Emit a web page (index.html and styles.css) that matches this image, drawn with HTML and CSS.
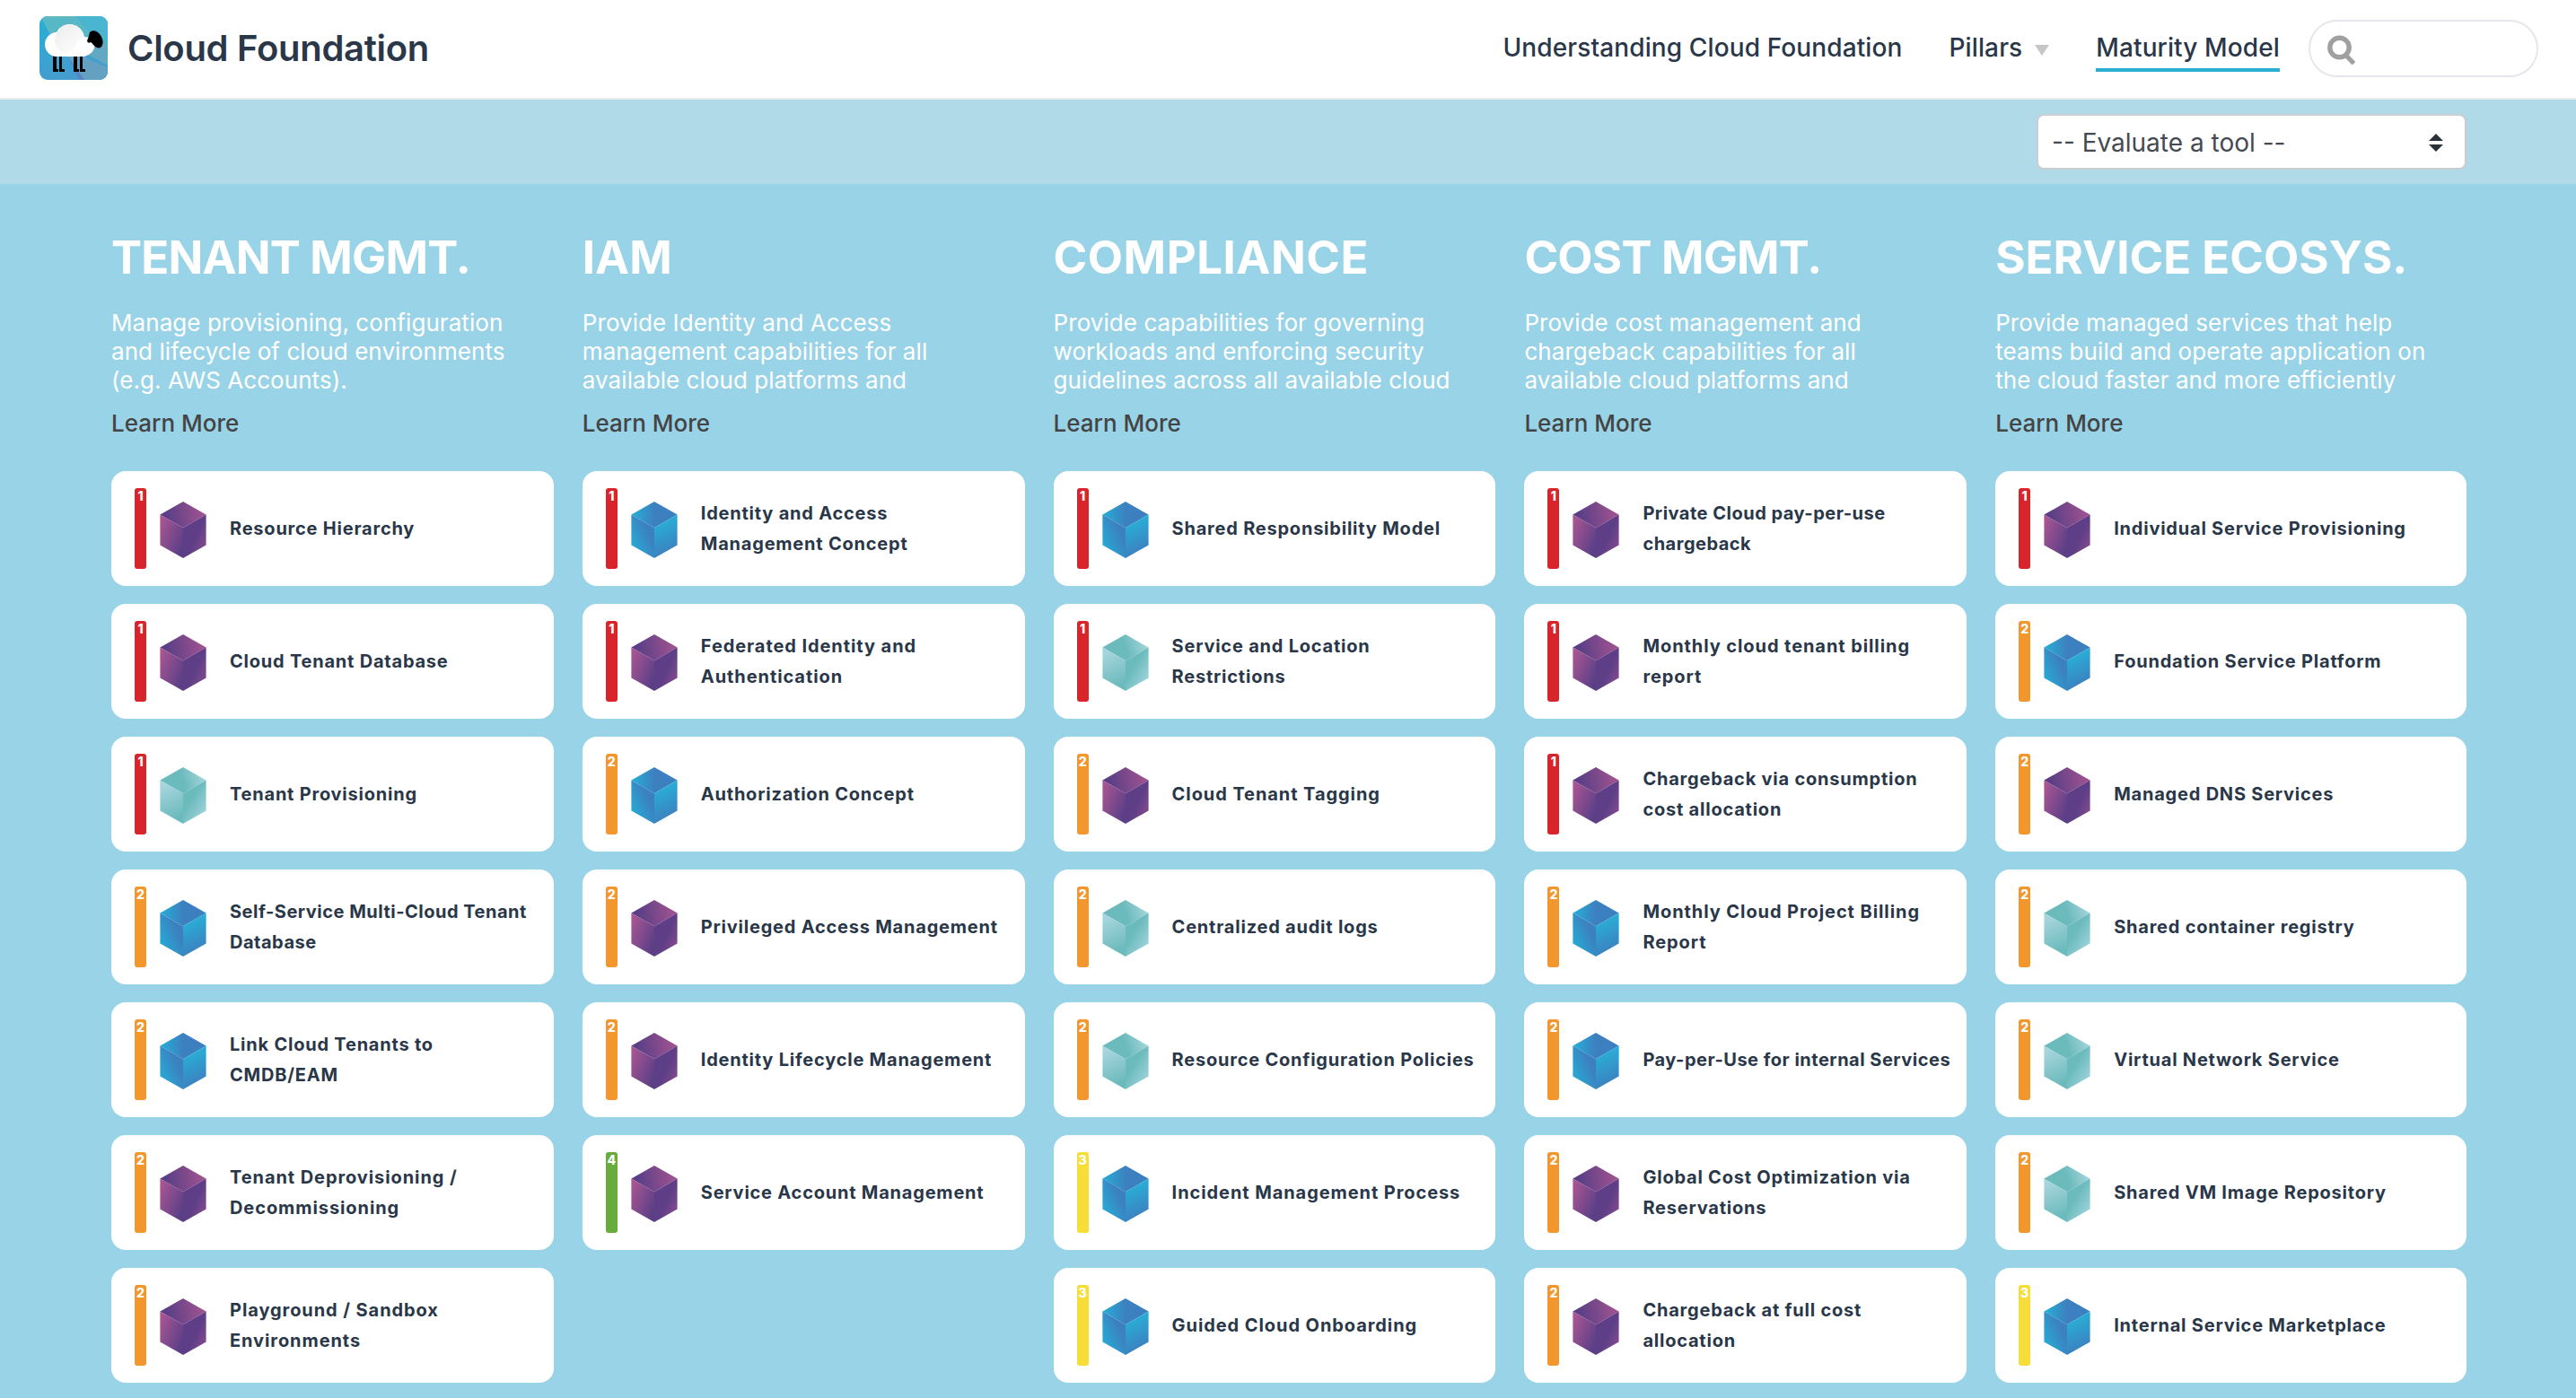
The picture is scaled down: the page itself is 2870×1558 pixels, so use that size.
FILE: index.html
```html
<!DOCTYPE html>
<html lang="en">
<head>
<meta charset="utf-8">
<title>Cloud Foundation Maturity Model</title>
<link rel="stylesheet" href="styles.css">
</head>
<body>
<svg class="defs" width="0" height="0" aria-hidden="true">
  <defs>
    <linearGradient id="p-top" x1="0" x2="1" y1=".5" y2=".4"><stop offset=".1" stop-color="#573e86"/><stop offset=".9" stop-color="#9c528f"/></linearGradient>
    <linearGradient id="p-left" x1="0" y1=".15" x2=".9" y2=".85"><stop offset="0" stop-color="#a95692"/><stop offset="1" stop-color="#5a3f87"/></linearGradient>
    <linearGradient id="p-right" x1=".2" y1=".2" x2="1" y2=".9"><stop offset=".45" stop-color="#5e3f87"/><stop offset="1" stop-color="#8d4c8e"/></linearGradient>
    <linearGradient id="b-top" x1="0" x2="1" y1=".5" y2=".5"><stop offset="0" stop-color="#26afd7"/><stop offset=".5" stop-color="#3c80c0"/><stop offset="1" stop-color="#3d7fc1"/></linearGradient>
    <linearGradient id="b-left" x1=".9" y1=".3" x2=".2" y2=".9"><stop offset=".2" stop-color="#3c80c0"/><stop offset="1" stop-color="#27a9d4"/></linearGradient>
    <linearGradient id="b-right" x1=".4" y1=".1" x2=".6" y2=".9"><stop offset=".1" stop-color="#2aabd4"/><stop offset="1" stop-color="#3c80c0"/></linearGradient>
    <linearGradient id="t-top" x1="0" x2="1" y1=".6" y2=".4"><stop offset=".5" stop-color="#6bbabc"/><stop offset="1" stop-color="#a6d7dc"/></linearGradient>
    <linearGradient id="t-left" x1=".4" y1=".05" x2=".6" y2=".9"><stop offset="0" stop-color="#a6d5dd"/><stop offset="1" stop-color="#6bbabc"/></linearGradient>
    <linearGradient id="t-right" x1=".2" y1=".2" x2=".8" y2=".9"><stop offset=".3" stop-color="#6bbabc"/><stop offset="1" stop-color="#9dd3d9"/></linearGradient>
    <linearGradient id="logo-bg" x1="0" x2=".3" y1="0" y2="1"><stop offset="0" stop-color="#25b0d6"/><stop offset="1" stop-color="#459ccf"/></linearGradient>
    <linearGradient id="wool" x1="0" x2="1" y1="0" y2="1"><stop offset="0" stop-color="#ececec"/><stop offset="1" stop-color="#fff"/></linearGradient>
    <symbol id="purple" viewBox="0 0 52 63"><path fill="url(#p-top)" d="M26 0 51.6 14.6 26 29.2.4 14.6z"/><path fill="url(#p-left)" d="M.4 14.6 26 29.2V63L.4 48.4z"/><path fill="url(#p-right)" d="M51.6 14.6 26 29.2V63l25.6-14.6z"/></symbol>
    <symbol id="blue" viewBox="0 0 52 63"><path fill="url(#b-top)" d="M26 0 51.6 14.6 26 29.2.4 14.6z"/><path fill="url(#b-left)" d="M.4 14.6 26 29.2V63L.4 48.4z"/><path fill="url(#b-right)" d="M51.6 14.6 26 29.2V63l25.6-14.6z"/></symbol>
    <symbol id="teal" viewBox="0 0 52 63"><path fill="url(#t-top)" d="M26 0 51.6 14.6 26 29.2.4 14.6z"/><path fill="url(#t-left)" d="M.4 14.6 26 29.2V63L.4 48.4z"/><path fill="url(#t-right)" d="M51.6 14.6 26 29.2V63l25.6-14.6z"/></symbol>
  </defs>
</svg>

<header class="navbar">
  <a class="brand">
    <svg class="logo" viewBox="0 0 76 71">
      <path fill="url(#logo-bg)" d="M0 0h76v71H0z"/>
      <path fill="#49b5d0" d="M0 0h76v50L22 20z"/>
      <path fill="#6abbbd" d="M4 0h40L8 6z"/>
      <path fill="#59b8c5" d="M2 2 42 1 58 22 14 25z"/>
      <path fill="#63a8c2" d="M48 40 76 55V32L62 24z"/>
      <path fill="#63a0c2" d="M32 45 44 43 76 57v14H50z"/>
      <path fill="#5b83c4" d="M32 46 50 71h-6z"/>
      <path d="M15 43h4v16h2v3h-6zM22 43h3v16h3v3h-6zM38 43h4v16h2v3h-6zM45 43h3v16h3v3h-6z"/>
      <path fill="#fff" d="M20 45a13.5 13.5 0 0 1-1-27 16.500 16.500 0 0 1 31 5q11 0 11.500 9T50 45z"/>
      <path fill="url(#wool)" d="M19 18a16.500 16.500 0 0 1 31 5q-7 2-9 8-3 10-12 10-12-2-12-16z"/>
      <path d="M56 18c4-4 10-1 13 5 4 8 0 14-5 12-4-2-5-5-7-6-3 2-5-1-3-4z"/>
    </svg>
    <span class="site-name">Cloud Foundation</span>
  </a>
  <nav class="links">
    <a class="link">Understanding Cloud Foundation</a>
    <a class="link dropdown">Pillars<i class="caret"></i></a>
    <a class="link active">Maturity Model</a>
  </nav>
  <div class="search">
    <svg class="search-icon" viewBox="0 0 32 34"><circle cx="13.500" cy="14" r="10.700" fill="none" stroke="#a0a0a0" stroke-width="5.400"/><path d="m21 23 8.500 8.800" stroke="#a0a0a0" stroke-width="5.200"/></svg>
  </div>
</header>

<div class="toolbar">
  <div class="select"><span>-- Evaluate a tool --</span>
    <svg class="arrows" viewBox="0 0 16 20"><path fill="#2b3138" d="M8 0l8 8H0zM0 12h16l-8 8z"/></svg>
  </div>
</div>

<main class="model">
  <section class="pillar">
    <h2 class="mgmt">TENANT MGMT.</h2>
    <p>Manage provisioning, configuration<br>and lifecycle of cloud environments<br>(e.g. AWS Accounts).</p>
    <a class="more">Learn More</a>
    <ul>
      <li class="card"><b class="level l1">1</b><svg class="cube"><use href="#purple"/></svg><span>Resource Hierarchy</span></li>
      <li class="card"><b class="level l1">1</b><svg class="cube"><use href="#purple"/></svg><span>Cloud Tenant Database</span></li>
      <li class="card"><b class="level l1">1</b><svg class="cube"><use href="#teal"/></svg><span>Tenant Provisioning</span></li>
      <li class="card tight"><b class="level l2">2</b><svg class="cube"><use href="#blue"/></svg><span>Self-Service Multi-Cloud Tenant<br>Database</span></li>
      <li class="card"><b class="level l2">2</b><svg class="cube"><use href="#blue"/></svg><span>Link Cloud Tenants to<br>CMDB/EAM</span></li>
      <li class="card wide"><b class="level l2">2</b><svg class="cube"><use href="#purple"/></svg><span>Tenant Deprovisioning /<br>Decommissioning</span></li>
      <li class="card wide"><b class="level l2">2</b><svg class="cube"><use href="#purple"/></svg><span>Playground / Sandbox<br>Environments</span></li>
    </ul>
  </section>

  <section class="pillar">
    <h2>IAM</h2>
    <p>Provide Identity and Access<br>management capabilities for all<br>available cloud platforms and</p>
    <a class="more">Learn More</a>
    <ul>
      <li class="card"><b class="level l1">1</b><svg class="cube"><use href="#blue"/></svg><span>Identity and Access<br>Management Concept</span></li>
      <li class="card wide"><b class="level l1">1</b><svg class="cube"><use href="#purple"/></svg><span>Federated Identity and<br>Authentication</span></li>
      <li class="card"><b class="level l2">2</b><svg class="cube"><use href="#blue"/></svg><span>Authorization Concept</span></li>
      <li class="card"><b class="level l2">2</b><svg class="cube"><use href="#purple"/></svg><span>Privileged Access Management</span></li>
      <li class="card"><b class="level l2">2</b><svg class="cube"><use href="#purple"/></svg><span>Identity Lifecycle Management</span></li>
      <li class="card"><b class="level l4">4</b><svg class="cube"><use href="#purple"/></svg><span>Service Account Management</span></li>
    </ul>
  </section>

  <section class="pillar">
    <h2 class="spaced">COMPLIANCE</h2>
    <p>Provide capabilities for governing<br>workloads and enforcing security<br>guidelines across all available cloud</p>
    <a class="more">Learn More</a>
    <ul>
      <li class="card"><b class="level l1">1</b><svg class="cube"><use href="#blue"/></svg><span>Shared Responsibility Model</span></li>
      <li class="card"><b class="level l1">1</b><svg class="cube"><use href="#teal"/></svg><span>Service and Location<br>Restrictions</span></li>
      <li class="card wide"><b class="level l2">2</b><svg class="cube"><use href="#purple"/></svg><span>Cloud Tenant Tagging</span></li>
      <li class="card"><b class="level l2">2</b><svg class="cube"><use href="#teal"/></svg><span>Centralized audit logs</span></li>
      <li class="card"><b class="level l2">2</b><svg class="cube"><use href="#teal"/></svg><span>Resource Configuration Policies</span></li>
      <li class="card wide"><b class="level l3">3</b><svg class="cube"><use href="#blue"/></svg><span>Incident Management Process</span></li>
      <li class="card wide"><b class="level l3">3</b><svg class="cube"><use href="#blue"/></svg><span>Guided Cloud Onboarding</span></li>
    </ul>
  </section>

  <section class="pillar">
    <h2 class="mgmt">COST MGMT.</h2>
    <p>Provide cost management and<br>chargeback capabilities for all<br>available cloud platforms and</p>
    <a class="more">Learn More</a>
    <ul>
      <li class="card tight"><b class="level l1">1</b><svg class="cube"><use href="#purple"/></svg><span>Private Cloud pay-per-use<br>chargeback</span></li>
      <li class="card wide"><b class="level l1">1</b><svg class="cube"><use href="#purple"/></svg><span>Monthly cloud tenant billing<br>report</span></li>
      <li class="card"><b class="level l1">1</b><svg class="cube"><use href="#purple"/></svg><span>Chargeback via consumption<br>cost allocation</span></li>
      <li class="card wide"><b class="level l2">2</b><svg class="cube"><use href="#blue"/></svg><span>Monthly Cloud Project Billing<br>Report</span></li>
      <li class="card tight"><b class="level l2">2</b><svg class="cube"><use href="#blue"/></svg><span>Pay-per-Use for internal Services</span></li>
      <li class="card"><b class="level l2">2</b><svg class="cube"><use href="#purple"/></svg><span>Global Cost Optimization via<br>Reservations</span></li>
      <li class="card"><b class="level l2">2</b><svg class="cube"><use href="#purple"/></svg><span>Chargeback at full cost<br>allocation</span></li>
    </ul>
  </section>

  <section class="pillar">
    <h2>SERVICE ECOSYS.</h2>
    <p>Provide managed services that help<br>teams build and operate application on<br>the cloud faster and more efficiently</p>
    <a class="more">Learn More</a>
    <ul>
      <li class="card"><b class="level l1">1</b><svg class="cube"><use href="#purple"/></svg><span>Individual Service Provisioning</span></li>
      <li class="card"><b class="level l2">2</b><svg class="cube"><use href="#blue"/></svg><span>Foundation Service Platform</span></li>
      <li class="card"><b class="level l2">2</b><svg class="cube"><use href="#purple"/></svg><span>Managed DNS Services</span></li>
      <li class="card"><b class="level l2">2</b><svg class="cube"><use href="#teal"/></svg><span>Shared container registry</span></li>
      <li class="card"><b class="level l2">2</b><svg class="cube"><use href="#teal"/></svg><span>Virtual Network Service</span></li>
      <li class="card"><b class="level l2">2</b><svg class="cube"><use href="#teal"/></svg><span>Shared VM Image Repository</span></li>
      <li class="card"><b class="level l3">3</b><svg class="cube"><use href="#blue"/></svg><span>Internal Service Marketplace</span></li>
    </ul>
  </section>
</main>
</body>
</html>
```
FILE: styles.css
```css
* { box-sizing: border-box; }

body {
  margin: 0;
  min-height: 1558px;
  background: #99d3e7;
  color: #2c3e50;
  font-family: Inter, "Liberation Sans", sans-serif;
}

.defs { display: block; }

/* Top bar */
.navbar {
  display: flex;
  align-items: center;
  height: 111px;
  padding: 0 42px 2px 44px;
  background: #fff;
  border-bottom: 2px solid #e9ebee;
  color: #293749;
}
.brand { display: flex; align-items: center; gap: 22px; }
.logo { display: block; width: 76px; height: 71px; border-radius: 9px; }
.site-name {
  font-size: 40px;
  font-weight: 600;
  line-height: 52px;
  letter-spacing: -0.3px;
}
.links { display: flex; align-items: center; gap: 52px; margin-left: auto; }
.link {
  font-size: 28px;
  font-weight: 500;
  line-height: 45px;
  letter-spacing: 0.12px;
  white-space: nowrap;
}
.link.active { border-bottom: 4px solid #2aafd3; margin-bottom: -4px; }
.dropdown { display: flex; align-items: center; gap: 14px; }
.caret {
  border: 8px solid transparent;
  border-top: 12px solid #c6c6c6;
  border-bottom: 0;
  margin-top: 5px;
}
.search {
  width: 256px;
  height: 64px;
  margin: 1px 0 0 32px;
  padding: 15px 0 0 19px;
  border: 2px solid #e6e7ec;
  border-radius: 32px;
}
.search-icon { display: block; width: 32px; height: 34px; }

/* Tool selector */
.toolbar {
  display: flex;
  justify-content: flex-end;
  height: 94px;
  padding: 16px 122px 0 0;
  background: #b0dae8;
}
.select {
  display: flex;
  align-items: center;
  justify-content: space-between;
  width: 479px;
  height: 62px;
  padding: 1px 24px 0 15px;
  background: #fff;
  border: 2px solid #cacdd2;
  border-radius: 8px;
  color: #454a52;
  font-size: 28px;
}
.arrows { width: 16px; height: 20px; }

/* Pillars */
.model {
  display: grid;
  grid-template-columns: repeat(5, 1fr);
  padding: 50px 122px 17px 124px;
}
.pillar { padding-right: 32px; }
.pillar:last-child { padding-right: 0; }
.pillar h2 {
  margin: 0 0 26px;
  color: #fff;
  font-size: 51px;
  font-weight: 700;
  line-height: 63px;
  white-space: nowrap;
}
.pillar h2.mgmt { letter-spacing: -0.8px; }
.pillar h2.spaced { letter-spacing: 0.5px; }
.pillar p {
  margin: 0 0 16px;
  color: #fff;
  font-size: 26px;
  line-height: 32px;
  letter-spacing: 0.06px;
  white-space: nowrap;
}
.more {
  display: block;
  margin-bottom: 37px;
  color: #444;
  font-size: 26px;
  font-weight: 500;
  line-height: 32px;
}
.pillar ul {
  display: grid;
  gap: 20px;
  margin: 0;
  padding: 0;
  list-style: none;
}

/* Building block cards */
.card {
  display: flex;
  align-items: center;
  height: 128px;
  padding-left: 26px;
  background: #fff;
  border-radius: 16px;
  color: #293749;
  font-size: 20px;
  font-weight: 700;
  line-height: 34px;
  letter-spacing: 0.78px;
  white-space: nowrap;
}
.card.tight { letter-spacing: 0.5px; }
.card.wide { letter-spacing: 0.92px; }
.level {
  width: 13px;
  height: 90px;
  margin-right: 15px;
  padding-top: 2px;
  border-radius: 3px;
  color: #fff;
  font-size: 14px;
  font-weight: 800;
  line-height: 14px;
  letter-spacing: 0;
  text-align: center;
}
.l1 { background: #d8252b; }
.l2 { background: #f2962e; }
.l3 { background: #f6dd38; }
.l4 { background: #68ac3e; }
.cube {
  flex: none;
  width: 52px;
  height: 63px;
  margin: 3px 26px 0 0;
}
```
